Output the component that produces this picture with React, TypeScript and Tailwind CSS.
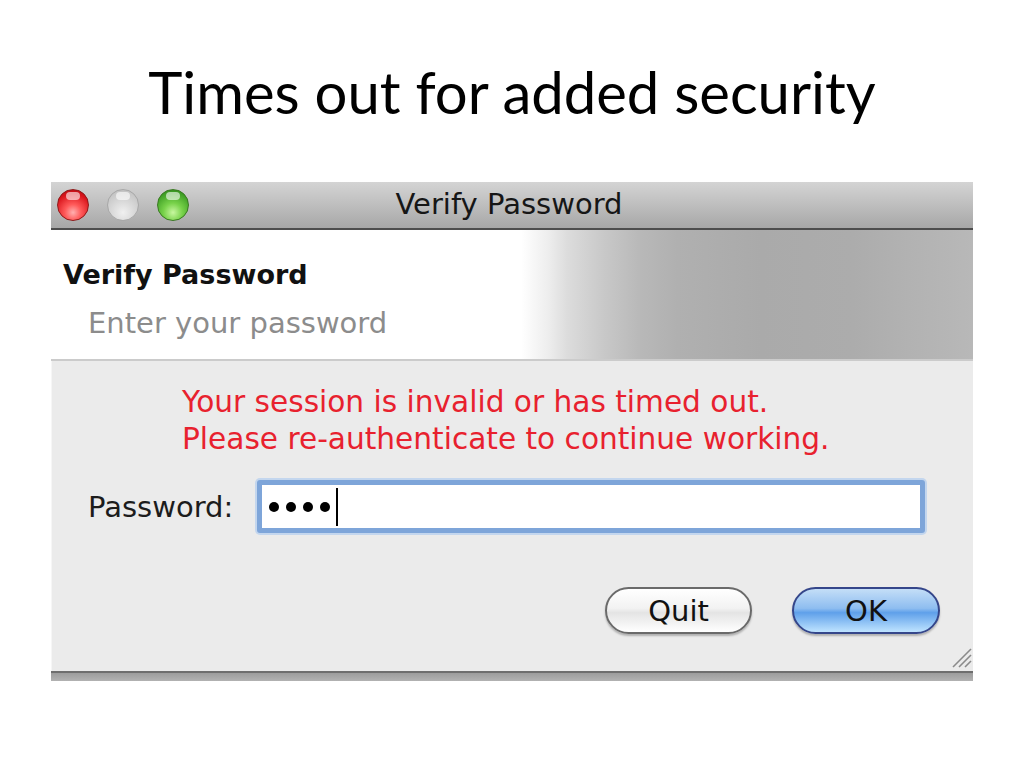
import React from "react";

const dialogFont = { fontFamily: '"DejaVu Sans", "Liberation Sans", sans-serif' };

function TrafficLight({ color }: { color: "red" | "gray" | "green" }) {
  const cls =
    color === "red"
      ? "bg-[radial-gradient(circle_at_50%_75%,#ffb0b0_0%,#ff5a5a_30%,#d9141b_70%,#a50d12_100%)] border-[#8f1a1a]"
      : color === "green"
        ? "bg-[radial-gradient(circle_at_50%_75%,#c8f7a0_0%,#78d24a_35%,#3f9f25_75%,#2f7a1a_100%)] border-[#3a7a22]"
        : "bg-[radial-gradient(circle_at_50%_75%,#f0f0f0_0%,#dadada_40%,#c4c4c4_80%,#b0b0b0_100%)] border-[#a8a8a8]";
  return (
    <div className={`relative w-[32px] h-[32px] rounded-full border ${cls}`}>
      <div className="absolute left-[8px] top-[2px] w-[14px] h-[8px] rounded-full bg-white/60" />
    </div>
  );
}

function ResizeGrip() {
  return (
    <svg width="24" height="24" viewBox="0 0 24 24" className="absolute right-[0px] bottom-[2px]">
      <line x1="4" y1="22" x2="22" y2="4" stroke="#8a8a8a" strokeWidth="1.6" />
      <line x1="10" y1="22" x2="22" y2="10" stroke="#8a8a8a" strokeWidth="1.6" />
      <line x1="16" y1="22" x2="22" y2="16" stroke="#8a8a8a" strokeWidth="1.6" />
    </svg>
  );
}

export default function App() {
  return (
    <div className="w-[1024px] h-[768px] bg-white flex flex-col">
      {/* Slide title */}
      <div className="h-[182px] pt-[57px]">
        <h1
          className="text-center text-[58px] leading-[70px] text-black"
          style={{ fontFamily: 'Lato, "Open Sans", sans-serif' }}
        >
          Times out for added security
        </h1>
      </div>

      {/* Dialog window */}
      <div className="ml-[51px] w-[922px] flex flex-col" style={dialogFont}>
        {/* Title bar */}
        <div className="relative h-[48px] border-b-2 border-[#4d4d4d] bg-[linear-gradient(to_bottom,#d4d4d4,#bebebe_50%,#a7a7a7)] flex items-center">
          <div className="flex items-center gap-[18px] pl-[6px]">
            <TrafficLight color="red" />
            <TrafficLight color="gray" />
            <TrafficLight color="green" />
          </div>
          <div className="absolute inset-0 flex items-center justify-center pr-[6px] text-[29px] text-[#161616]">
            Verify Password
          </div>
        </div>

        {/* Header */}
        <div className="h-[131px] border-b-2 border-[#cbcbcb] bg-[linear-gradient(to_right,#ffffff_0%,#ffffff_51%,#ededed_54%,#dcdcdc_56%,#c8c8c8_60%,#b8b8b8_64%,#b0b0b0_68%,#aaaaaa_77%,#acacac_87%,#b2b2b2_93%,#b8b8b8_100%)] pl-[12px] pt-[29px]">
          <div className="text-[27px] leading-[32px] font-bold text-[#111]">Verify Password</div>
          <div className="mt-[15px] ml-[25px] text-[29px] leading-[34px] text-[#8c8c8c]">
            Enter your password
          </div>
        </div>

        {/* Body */}
        <div className="relative h-[310px] bg-[#ebebeb] border-l border-[#f6f6f6]">
          <div className="pt-[23px] pl-[130px] text-[29.6px] leading-[37px] text-[#e8212e]">
            <div>Your session is invalid or has timed out.</div>
            <div>Please re-authenticate to continue working.</div>
          </div>

          <div className="mt-[22px] pl-[36px] flex items-start">
            <div className="w-[169px] pt-[10px] text-[29px] leading-[34px] text-[#1c1c1c]">Password:</div>
            <div className="w-[668px] h-[53px] rounded-[3px] border-[5px] border-[#7ea5d9] bg-white shadow-[0_0_0_2px_#c3d6ee] flex items-center pl-[7px] gap-[7px]">
              <span className="w-[10px] h-[10px] rounded-full bg-black" />
              <span className="w-[10px] h-[10px] rounded-full bg-black" />
              <span className="w-[10px] h-[10px] rounded-full bg-black" />
              <span className="w-[10px] h-[10px] rounded-full bg-black" />
              <span className="w-[2px] h-[38px] bg-black -ml-[1px]" />
            </div>
          </div>

          <div className="mt-[54px] pr-[33px] flex justify-end gap-[40px]">
            <button className="w-[147px] h-[47px] rounded-full border-2 border-[#6a6a6a] bg-[linear-gradient(to_bottom,#ffffff,#f2f2f2_45%,#e4e4e4_55%,#ffffff)] shadow-[0_2px_2px_rgba(0,0,0,0.25)] text-[29px] leading-[34px] text-[#111]">
              Quit
            </button>
            <button className="w-[148px] h-[47px] rounded-full border-2 border-[#35468a] bg-[linear-gradient(to_bottom,#c4def7,#8ebdf0_45%,#5fa0ea_55%,#bfe4ff)] shadow-[0_2px_2px_rgba(0,0,0,0.25)] text-[29px] leading-[34px] text-[#111]">
              OK
            </button>
          </div>

          <ResizeGrip />
        </div>

        {/* Bottom edge */}
        <div className="h-[10px] border-t-2 border-[#6e6e6e] bg-[linear-gradient(to_bottom,#9c9c9c,#b2b2b2)]" />
      </div>
    </div>
  );
}
